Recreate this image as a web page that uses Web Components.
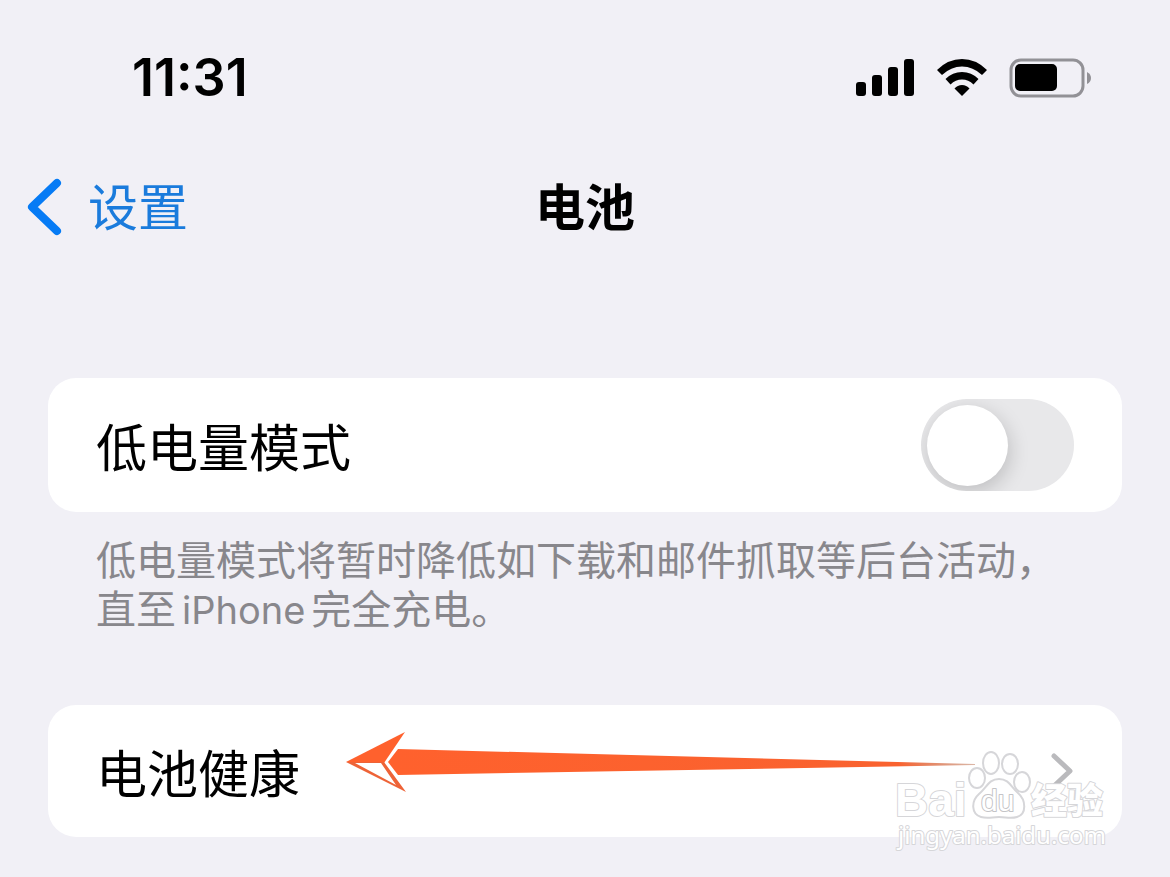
<!DOCTYPE html>
<html lang="zh-CN">
<head>
<meta charset="utf-8">
<title>电池</title>
<style>
  body {
    margin: 0;
    background: #f1f0f6;
    color: #000;
    font-family: Inter, "Noto Sans CJK SC", sans-serif;
  }
</style>
</head>
<body>
<battery-page></battery-page>

<script>
function define(name, html) {
  const template = document.createElement('template');
  template.innerHTML = html;
  customElements.define(name, class extends HTMLElement {
    constructor() {
      super();
      this.attachShadow({ mode: 'open' }).append(template.content.cloneNode(true));
    }
  });
}

define('status-bar', `
  <style>
    :host { display: flex; align-items: center; justify-content: space-between; height: 60px; padding: 48px 78px 0 132px; }
    time { font-size: 52px; line-height: 60px; font-weight: 600; }
    .icons { display: flex; align-items: center; gap: 22px; }
    svg { display: block; }
  </style>
  <time>11:31</time>
  <div class="icons">
    <svg width="60" height="38" viewBox="0 0 60 38" role="img" aria-label="信号">
      <rect x="1" y="23" width="10" height="14" rx="3"/>
      <rect x="17" y="16" width="10" height="21" rx="3"/>
      <rect x="33" y="8" width="10" height="29" rx="3"/>
      <rect x="49" y="0" width="10" height="37" rx="3"/>
    </svg>
    <svg width="50" height="38" viewBox="0 0 50 38" role="img" aria-label="无线网络">
      <path d="M0 11 Q11 0 25 0 Q39 0 50 11 L45 16 Q36 7.500 25 7.500 Q14 7.500 5 16Z"/>
      <path d="M8.500 20 Q15.500 13 25 13 Q34.500 13 41.500 20 L36.500 25.500 Q31.500 20.500 25 20.500 Q18.500 20.500 13.500 25.500Z"/>
      <path d="M17.500 29.500 Q20.500 26 25 26 Q29.500 26 32.500 29.500 L25 37Z"/>
    </svg>
    <svg width="83" height="40" viewBox="0 0 83 40" role="img" aria-label="电池电量">
      <rect x="2" y="2" width="72" height="36" rx="10" fill="none" stroke="#929196" stroke-width="3"/>
      <rect x="6" y="6" width="42" height="27" rx="5"/>
      <path d="M78 14 Q82 16 82 20 Q82 24 78 26Z" fill="#929196"/>
    </svg>
  </div>`);

define('nav-bar', `
  <style>
    :host { display: grid; grid-template-columns: 1fr auto 1fr; align-items: center; height: 60px; margin-top: 70px; padding: 0 26px; }
    a { display: flex; align-items: center; gap: 26px; color: #1a7bdc; text-decoration: none; font-size: 50px; line-height: 60px; }
    h1 { margin: 0; font-size: 50px; line-height: 60px; font-weight: 600; }
    svg { display: block; }
  </style>
  <a href="#settings">
    <svg width="36" height="60" viewBox="0 0 36 60" fill="none" stroke="#067bf5" stroke-width="8" stroke-linecap="round" stroke-linejoin="round" aria-hidden="true"><path d="M31 5 L6 29 L31 53"/></svg>
    <slot name="back"></slot>
  </a>
  <h1><slot></slot></h1>`);

define('settings-card', `
  <style>
    :host { display: block; margin: 0 48px; }
    .card { background: #fff; border-radius: 28px; }
    ::slotted(p) { margin: 0; padding: 24px 48px 0; color: #88878c; font-size: 40px; line-height: 49px; }
  </style>
  <div class="card"><slot></slot></div>
  <slot name="note"></slot>`);

define('toggle-row', `
  <style>
    :host { display: block; }
    label { display: flex; align-items: center; justify-content: space-between; height: 134px; padding: 0 48px; font-size: 51px; line-height: 60px; }
    span { padding-top: 8px; }
    input {
      appearance: none; flex: none; display: flex; align-items: center;
      width: 153px; height: 92px; margin: 0; padding: 0 6px;
      border-radius: 46px; background: #e8e8ea; overflow: hidden;
    }
    input::before {
      content: ""; width: 81px; height: 81px; border-radius: 50%;
      background: #fff; box-shadow: 2px 6px 20px rgba(0, 0, 0, .18);
    }
    input:checked { justify-content: flex-end; background: #34c759; }
  </style>
  <label><span><slot></slot></span><input type="checkbox" role="switch"></label>`);

define('link-row', `
  <style>
    :host { display: block; position: relative; }
    a { display: flex; align-items: center; justify-content: space-between; height: 132px; padding: 0 48px; color: inherit; text-decoration: none; font-size: 51px; line-height: 60px; }
    span { padding-top: 8px; }
    svg { display: block; }
  </style>
  <a href="#health">
    <span><slot></slot></span>
    <svg width="24" height="38" viewBox="0 0 24 38" fill="none" stroke="#bababd" stroke-width="5" stroke-linecap="round" stroke-linejoin="round" aria-hidden="true"><path d="M4 4 L20 19 L4 34"/></svg>
  </a>
  <slot name="mark"></slot>`);

define('pointer-arrow', `
  <style>
    :host { position: absolute; left: 292px; top: 20px; pointer-events: none; }
    svg { display: block; }
  </style>
  <svg width="640" height="75" viewBox="340 725 640 75" aria-hidden="true">
    <defs>
      <linearGradient id="fade" gradientUnits="userSpaceOnUse" x1="388" y1="0" x2="975" y2="0">
        <stop offset="0" stop-color="#ff612d"/>
        <stop offset=".87" stop-color="#f9622f"/>
        <stop offset="1" stop-color="#b9704f" stop-opacity=".5"/>
      </linearGradient>
    </defs>
    <path d="M388 762 L398 749 L975 764 L975 765 L398 775Z" fill="url(#fade)"/>
    <path d="M346 762 L405 732 L384 763Z" fill="#ff612d"/>
    <path fill-rule="evenodd" d="M346 762 L384 762 L406 792Z M355 763 L396 785 L381 763Z" fill="#ee6337"/>
  </svg>`);

define('site-watermark', `
  <style>
    :host { position: absolute; right: 60px; bottom: 20px; pointer-events: none; }
    svg { display: block; }
    text { paint-order: stroke; }
  </style>
  <svg width="220" height="112" viewBox="890 745 220 112" fill="#fff" stroke="#d6d6d9" stroke-width="2" stroke-linejoin="round">
    <ellipse cx="977" cy="778" rx="8" ry="10"/>
    <ellipse cx="991" cy="763" rx="8" ry="11"/>
    <ellipse cx="1010" cy="764" rx="8" ry="10"/>
    <ellipse cx="1022" cy="782" rx="8" ry="10"/>
    <path d="M999 779 C1009 779 1011 787 1018 793 C1026 800 1027 814 1017 817 C1010 819 1006 817 999 817 C992 817 988 819 981 817 C971 814 971 801 979 794 C987 787 989 779 999 779Z"/>
    <text x="895" y="816" font-family="Liberation Sans, sans-serif" font-weight="700" font-size="46">Bai</text>
    <text x="981" y="811" font-family="Liberation Sans, sans-serif" font-size="30" stroke="#c4c4c7">du</text>
    <text x="1031" y="814" font-family="Noto Sans CJK SC, sans-serif" font-weight="900" font-size="36">经验</text>
    <text x="898" y="844" font-family="Noto Sans, sans-serif" font-size="24">jingyan.baidu.com</text>
  </svg>`);

define('battery-page', `
  <style>
    :host { display: block; position: relative; min-height: 100vh; }
    main { display: flex; flex-direction: column; gap: 71px; padding-top: 140px; }
    .latin { font-size: 38px; line-height: 38px; margin: 0 6px; }
  </style>
  <status-bar></status-bar>
  <nav-bar><span slot="back">设置</span>电池</nav-bar>
  <main>
    <settings-card>
      <toggle-row>低电量模式</toggle-row>
      <p slot="note">低电量模式将暂时降低如下载和邮件抓取等后台活动，<wbr>直至<span class="latin">iPhone</span>完全充电。</p>
    </settings-card>
    <settings-card>
      <link-row>电池健康<pointer-arrow slot="mark"></pointer-arrow></link-row>
    </settings-card>
  </main>
  <site-watermark></site-watermark>`);
</script>
</body>
</html>
